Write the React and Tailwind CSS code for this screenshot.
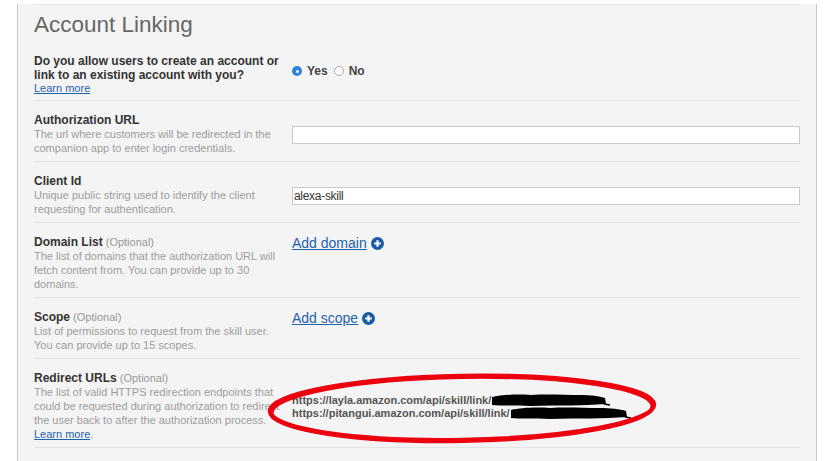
import React from 'react';

const font = { fontFamily: '"Liberation Sans", Arial, Helvetica, sans-serif' };

const PlusCircle = () => (
  <svg width="13" height="13" viewBox="0 0 13 13" className="inline-block">
    <circle cx="6.5" cy="6.5" r="6.5" fill="#1b5ba6" />
    <path d="M6.5 3.2v6.6M3.2 6.5h6.6" stroke="#fff" strokeWidth="2.2" />
  </svg>
);

const Scribble = ({ width }) => (
  <svg width={width} height="12" viewBox={`0 0 ${width} 12`} className="inline-block align-[-2px]">
    <path
      d={`M1 3 C 10 1, 24 0, 40 1 C 56 0, 74 1, 90 1 C 100 1, ${width - 12} 2, ${width - 6} 4 L ${width - 5} 10 C ${width - 30} 12, 70 11, 40 12 C 24 11, 10 12, 1 11 Z`}
      fill="#000"
    />
    <path d={`M${width - 7} 10 L ${width - 1} 11`} stroke="#000" strokeWidth="1.5" />
  </svg>
);

// one labelled row of the form, left column is the help text
const Field = ({ title, optional, children, right, extra }) => (
  <div className="relative flex border-b border-[#e3e3e3] pt-[12px] pb-[6px]">
    <div className="w-[248px] shrink-0">
      <div className="text-[12px] leading-[14px] font-bold text-[#333]">
        {title}
        {optional && <span className="font-normal text-[11px] text-[#999]"> (Optional)</span>}
      </div>
      <div className="text-[11px] leading-[14px] text-[#9d9d9d]">{children}</div>
    </div>
    <div className="ml-[10px] flex-1">{right}</div>
    {extra}
  </div>
);

const TextBox = ({ value }) => (
  <div className="mt-[13px] h-[18px] border border-[#c9c9c9] bg-white px-[1px] text-[12px] leading-[16px] tracking-[-0.3px] text-[#333]">
    {value}
  </div>
);

const AddLink = ({ label }) => (
  <div className="mt-[1px] flex items-center gap-[4px] text-[14px] leading-[14px]">
    <span className="text-[#1e62ae] underline">{label}</span>
    <PlusCircle />
  </div>
);

export default function App() {
  return (
    <div className="h-[461px] w-[835px] overflow-hidden bg-white" style={font}>
      <div className="ml-[17px] h-full w-[800px] border-x border-[#c6c6c6] bg-[#f4f4f4] px-4">
        <div className="mt-[4px] border-t border-[#e3e3e3]" />

        <div className="border-b border-[#e3e3e3] pt-[7px] pb-[6px]">
          <h1 className="text-[22.5px] leading-[26px] text-[#666]">Account Linking</h1>
          <div className="mt-[16px] flex">
            <div className="w-[248px] shrink-0">
              <div className="text-[12px] leading-[14px] font-bold text-[#333]">
                Do you allow users to create an account or link to an existing account with you?
              </div>
              <a className="block text-[11px] leading-[12px] text-[#1e62ae] underline">Learn more</a>
            </div>
            <div className="ml-[10px] mt-[10px] flex h-[14px] items-center text-[12px] font-bold text-[#444]">
              <span className="flex h-[10px] w-[10px] items-center justify-center rounded-full bg-[#2f7fe0]">
                <span className="h-[3px] w-[3px] rounded-full bg-white" />
              </span>
              <span className="ml-[5px]">Yes</span>
              <span className="ml-[6px] h-[10px] w-[10px] rounded-full border border-[#aaa] bg-white" />
              <span className="ml-[5px]">No</span>
            </div>
          </div>
        </div>

        <Field title="Authorization URL" right={<TextBox value="" />}>
          The url where customers will be redirected in the companion app to enter login credentials.
        </Field>

        <Field title="Client Id" right={<TextBox value="alexa-skill" />}>
          Unique public string used to identify the client requesting for authentication.
        </Field>

        <Field title="Domain List" optional right={<AddLink label="Add domain" />}>
          The list of domains that the authorization URL will fetch content from. You can provide up to 30 domains.
        </Field>

        <Field title="Scope" optional right={<AddLink label="Add scope" />}>
          List of permissions to request from the skill user. You can provide up to 15 scopes.
        </Field>

        <Field
          title="Redirect URLs"
          optional
          right={
            <div className="mt-[23px] text-[11px] leading-[13px] font-bold text-[#555]">
              <div className="whitespace-nowrap">
                https://layla.amazon.com/api/skill/link/<Scribble width={120} />
              </div>
              <div className="whitespace-nowrap">
                https://pitangui.amazon.com/api/skill/link/<Scribble width={122} />
              </div>
            </div>
          }
          extra={
            <svg
              className="pointer-events-none absolute left-[228px] top-[11px]"
              width="400"
              height="78"
              viewBox="0 0 400 78"
            >
              <ellipse
                cx="200"
                cy="38"
                rx="192"
                ry="32"
                fill="none"
                stroke="#ec0010"
                strokeWidth="4.5"
                transform="rotate(-1 200 38)"
              />
              <ellipse
                cx="200"
                cy="39.5"
                rx="190"
                ry="32"
                fill="none"
                stroke="#ec0010"
                strokeWidth="3"
                transform="rotate(-1 200 38)"
              />
            </svg>
          }
        >
          The list of valid HTTPS redirection endpoints that could be requested during authorization to redirect
          the user back to after the authorization process.{' '}
          <a className="text-[#1e62ae] underline">Learn more</a>.
        </Field>
      </div>
    </div>
  );
}
